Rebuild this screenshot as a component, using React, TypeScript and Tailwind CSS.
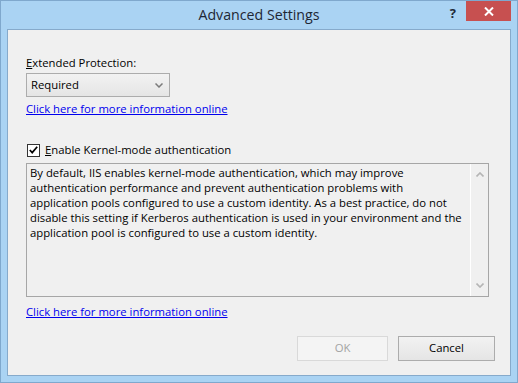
export default function App() {
  return (
    <div className="w-[518px] h-[383px] bg-[#aad3f3] border border-[#7fa8cd] flex flex-col font-['Open_Sans',sans-serif] text-[11.3px] text-black">
      {/* Title bar */}
      <div className="h-[28px] grid grid-cols-[1fr_auto_1fr] items-start">
        <div />
        <div className="text-[14.2px] leading-[28px] text-[#1e2733]">Advanced Settings</div>
        <div className="flex justify-end items-start pr-[6px]">
          <span className="mt-[5px] mr-[10px] text-[13px] font-bold leading-[14px] text-[#1e2a38]">?</span>
          <button className="w-[45px] h-[20px] bg-[#c75050] flex items-center justify-center">
            <svg width="10" height="9" viewBox="0 0 10 9">
              <path d="M1 0.5 L9 8.5 M9 0.5 L1 8.5" stroke="white" strokeWidth="2" />
            </svg>
          </button>
        </div>
      </div>

      {/* Client area */}
      <div className="mx-[6px] h-[347px] border border-[#86aacb] bg-[#f0f0f0] flex flex-col pl-[18px] pt-[25px]">
        <div className="leading-[16px]">
          <span className="underline">E</span>xtended Protection:
        </div>
        <div className="mt-[2px] w-[144px] h-[24px] border border-[#acacac] bg-gradient-to-b from-[#f2f2f2] to-[#e5e5e5] flex items-center justify-between pl-[4px] pr-[6px]">
          <span>Required</span>
          <svg width="8" height="5" viewBox="0 0 8 5">
            <path d="M0.5 0.5 L4 4 L7.5 0.5" stroke="#7a7a7a" strokeWidth="1.5" fill="none" />
          </svg>
        </div>
        <a className="mt-[4px] leading-[16px] text-[#0000ee] underline w-fit">Click here for more information online</a>

        <label className="mt-[25px] h-[16px] flex items-center gap-[5px]">
          <span className="ml-[1px] w-[13px] h-[13px] border border-[#333] bg-white flex items-center justify-center">
            <svg width="9" height="8" viewBox="0 0 9 8">
              <path d="M0.8 4 L3.2 6.6 L8.2 0.8" stroke="black" strokeWidth="1.7" fill="none" />
            </svg>
          </span>
          <span>
            <span className="underline">E</span>nable Kernel-mode authentication
          </span>
        </label>

        <div className="mt-[5px] w-[463px] h-[134px] border border-[#a6a6a6] bg-[#f0f0f0] flex">
          <div className="flex-1 pl-[3px] pt-[1px] leading-[15px] whitespace-nowrap">
            <div>By default, IIS enables kernel-mode authentication, which may improve</div>
            <div>authentication performance and prevent authentication problems with</div>
            <div>application pools configured to use a custom identity. As a best practice, do not</div>
            <div>disable this setting if Kerberos authentication is used in your environment and the</div>
            <div>application pool is configured to use a custom identity.</div>
          </div>
          <div className="w-[18px] border-l border-white flex flex-col justify-between items-center py-[8px]">
            <svg width="8" height="5" viewBox="0 0 8 5">
              <path d="M0.5 4.5 L4 1 L7.5 4.5" stroke="#b5b5b5" strokeWidth="1.6" fill="none" />
            </svg>
            <svg width="8" height="5" viewBox="0 0 8 5">
              <path d="M0.5 0.5 L4 4 L7.5 0.5" stroke="#b5b5b5" strokeWidth="1.6" fill="none" />
            </svg>
          </div>
        </div>

        <a className="mt-[7px] leading-[16px] text-[#0000ee] underline w-fit">Click here for more information online</a>

        <div className="mt-[16px] flex justify-end gap-[10px] pr-[15px]">
          <button className="w-[91px] h-[25px] border border-[#d9d9d9] bg-[#f4f4f4] text-[#a3a3a3]">OK</button>
          <button className="w-[97px] h-[25px] border border-[#acacac] bg-gradient-to-b from-[#f2f2f2] to-[#e5e5e5]">Cancel</button>
        </div>
      </div>
    </div>
  );
}
